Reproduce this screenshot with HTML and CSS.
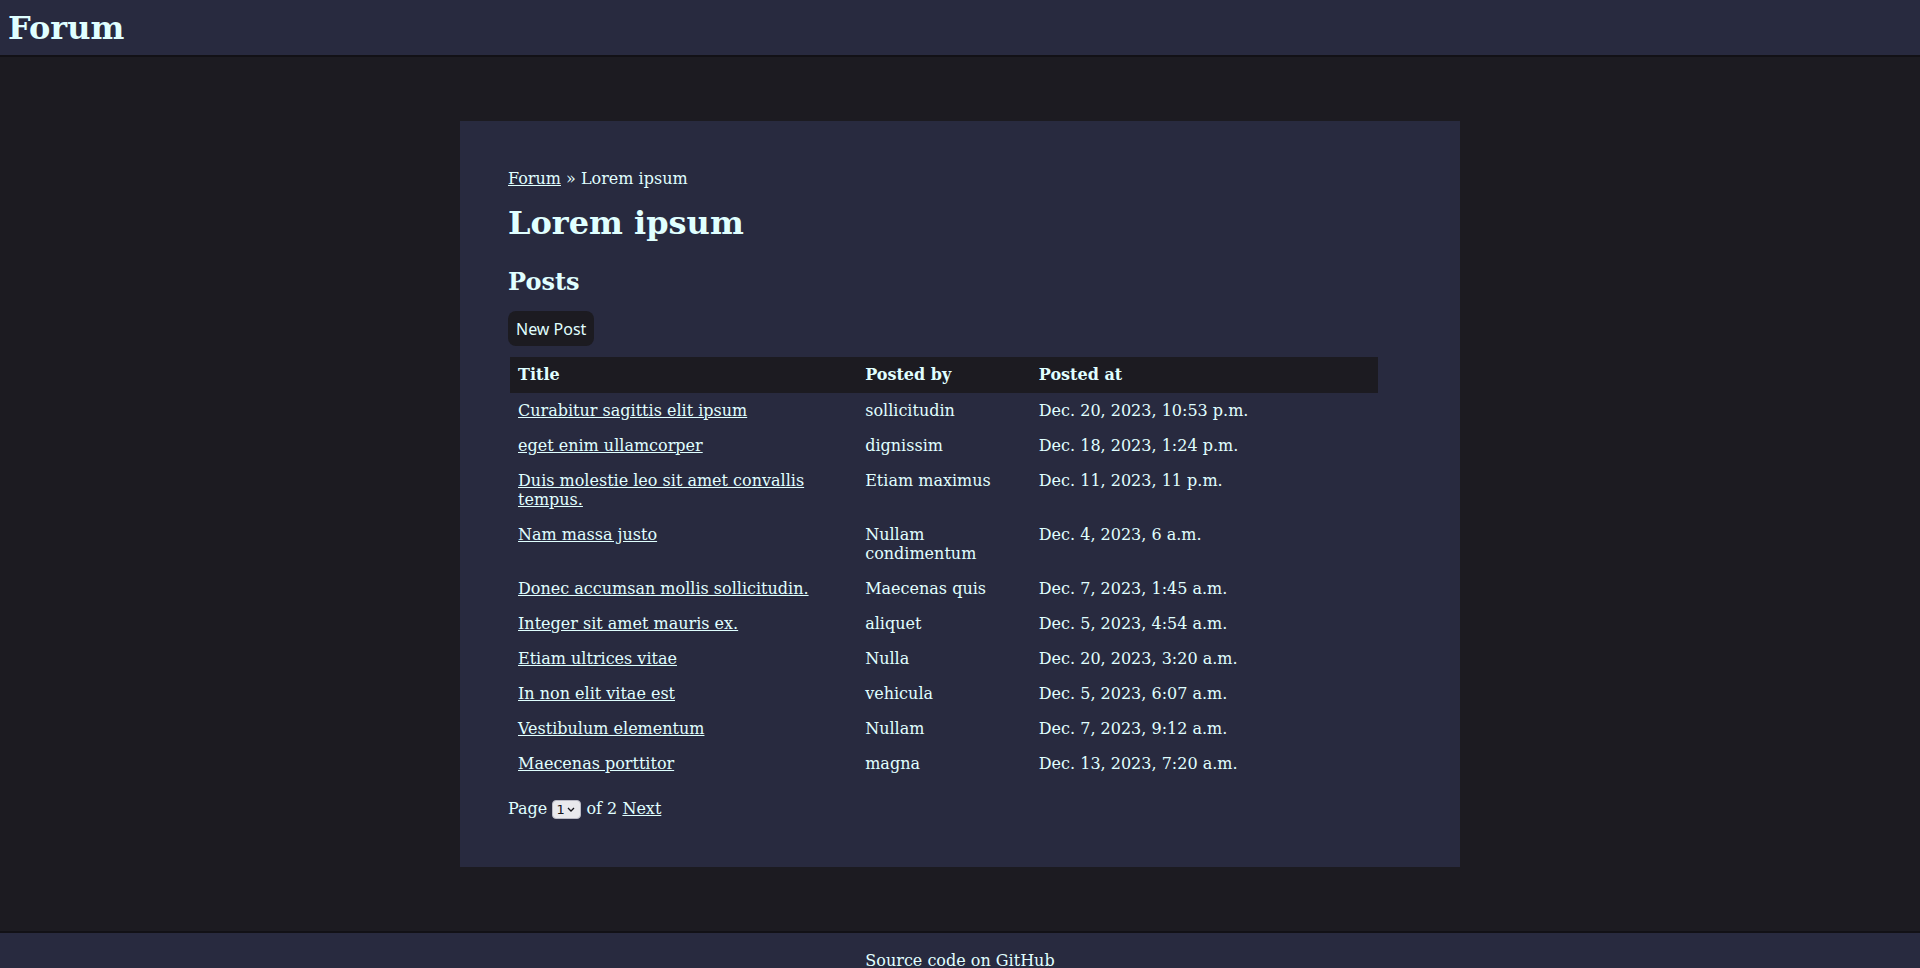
FILE: index.html
```html
<!DOCTYPE html>
<html lang="en">
<head>
<meta charset="utf-8">
<title>Lorem ipsum - Forum</title>
<link rel="stylesheet" href="styles.css">
</head>
<body>
<header class="site-header">
  <h1 class="site-title">Forum</h1>
</header>
<main class="panel">
  <p class="breadcrumb"><a href="#">Forum</a> » Lorem ipsum</p>
  <h1 class="page-title">Lorem ipsum</h1>
  <h2 class="section-title">Posts</h2>
  <button class="btn" type="button">New Post</button>
  <table class="posts">
    <colgroup><col class="c-title"><col class="c-by"><col class="c-at"></colgroup>
    <thead>
      <tr><th>Title</th><th>Posted by</th><th>Posted at</th></tr>
    </thead>
    <tbody>
      <tr><td><a href="#">Curabitur sagittis elit ipsum</a></td><td>sollicitudin</td><td>Dec. 20, 2023, 10:53 p.m.</td></tr>
      <tr><td><a href="#">eget enim ullamcorper</a></td><td>dignissim</td><td>Dec. 18, 2023, 1:24 p.m.</td></tr>
      <tr><td><a href="#">Duis molestie leo sit amet convallis tempus.</a></td><td>Etiam maximus</td><td>Dec. 11, 2023, 11 p.m.</td></tr>
      <tr><td><a href="#">Nam massa justo</a></td><td>Nullam condimentum</td><td>Dec. 4, 2023, 6 a.m.</td></tr>
      <tr><td><a href="#">Donec accumsan mollis sollicitudin.</a></td><td>Maecenas quis</td><td>Dec. 7, 2023, 1:45 a.m.</td></tr>
      <tr><td><a href="#">Integer sit amet mauris ex.</a></td><td>aliquet</td><td>Dec. 5, 2023, 4:54 a.m.</td></tr>
      <tr><td><a href="#">Etiam ultrices vitae</a></td><td>Nulla</td><td>Dec. 20, 2023, 3:20 a.m.</td></tr>
      <tr><td><a href="#">In non elit vitae est</a></td><td>vehicula</td><td>Dec. 5, 2023, 6:07 a.m.</td></tr>
      <tr><td><a href="#">Vestibulum elementum</a></td><td>Nullam</td><td>Dec. 7, 2023, 9:12 a.m.</td></tr>
      <tr><td><a href="#">Maecenas porttitor</a></td><td>magna</td><td>Dec. 13, 2023, 7:20 a.m.</td></tr>
    </tbody>
  </table>
  <p class="pager">Page <select class="pager-select"><option>1</option><option>2</option></select> of 2 <a href="#">Next</a></p>
</main>
<footer class="site-footer">
  <p class="footer-text">Source code on GitHub</p>
</footer>
</body>
</html>
```

FILE: styles.css
```css
html, body {
  margin: 0;
  padding: 0;
}
body {
  background: #1c1b21;
  color: #e0ffff;
  font-family: "DejaVu Serif", serif;
  font-size: 16px;
}
a {
  color: #e0ffff;
}
.site-header {
  background: #282a3f;
  border-bottom: 2px solid #121116;
  padding: 9px 8px 8px 8px;
}
.site-title {
  margin: 0;
  font-size: 32px;
  font-weight: bold;
}
.panel {
  display: block;
  width: 1000px;
  box-sizing: border-box;
  margin: 64px auto;
  padding: 32px 48px;
  background: #282a3f;
}
.breadcrumb {
  margin: 16px 0;
}
.page-title {
  font-size: 32px;
  margin: 16px 0 25px;
}
.section-title {
  font-size: 24px;
  margin: 20px 0 15px;
}
.btn {
  font-family: "Noto Sans", sans-serif;
  font-size: 16px;
  color: #e0ffff;
  background: #1c1b21;
  border: none;
  border-radius: 8px;
  padding: 6px 8px;
  height: 35px;
  cursor: pointer;
}
.posts {
  margin: 11px 0 0 2px;
  width: 868px;
  table-layout: fixed;
  border-collapse: collapse;
}
.c-title, .c-at { width: 40%; }
.c-by { width: 20%; }
.posts th, .posts td {
  text-align: left;
  vertical-align: top;
  padding: 8px;
  line-height: 19px;
}
.posts thead th {
  background: #1c1b21;
  font-weight: bold;
  padding: 8px 8px 9px;
}
.pager {
  margin: 18px 0 16px;
}
.pager-select {
  -webkit-appearance: none;
  appearance: none;
  font-family: "DejaVu Sans", sans-serif;
  font-size: 13px;
  line-height: 17px;
  color: #15141a;
  background-color: #e9e9ed;
  background-image: url("data:image/svg+xml,%3Csvg xmlns='http://www.w3.org/2000/svg' width='8' height='5' viewBox='0 0 8 5'%3E%3Cpath d='M1 1l3 3 3-3' fill='none' stroke='%2315141a' stroke-width='1.3'/%3E%3C/svg%3E");
  background-repeat: no-repeat;
  background-position: right 5px center;
  border: 1px solid #b9b9c4;
  border-radius: 4px;
  height: 19px;
  width: 29px;
  padding: 0 0 0 3px;
  vertical-align: middle;
}
.site-footer {
  background: #282a3f;
  border-top: 2px solid #121116;
  padding: 1px 0 8px;
  text-align: center;
}
.footer-text {
  margin: 17px 0 8px;
}
```
